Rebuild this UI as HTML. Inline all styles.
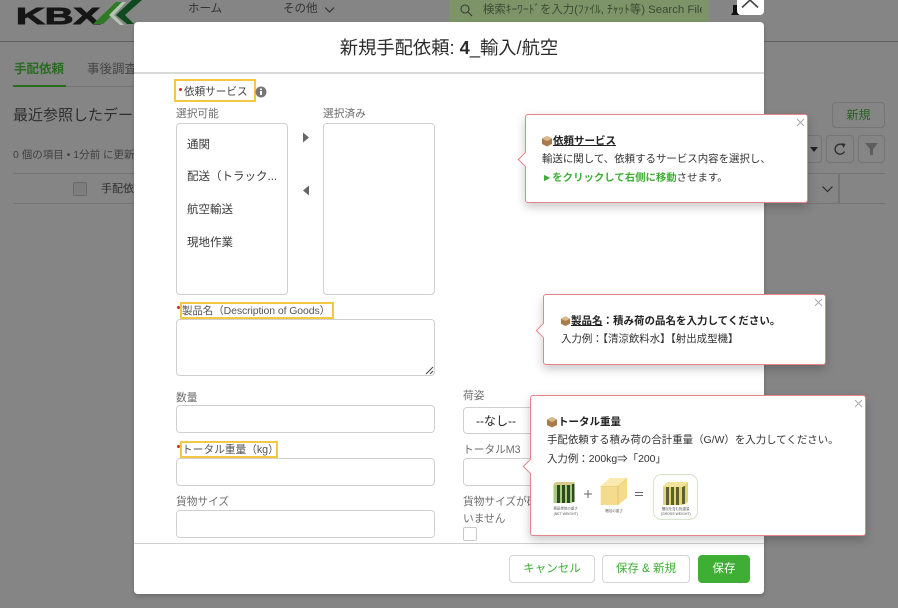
<!DOCTYPE html>
<html lang="ja">
<head>
<meta charset="utf-8">
<style>
html{margin:0;padding:0;width:898px;height:608px;overflow:hidden;background:#858585}
body{margin:0;padding:0;width:898px;height:608px;overflow:hidden;background:#858585;font-family:"Liberation Sans","Noto Sans CJK JP",sans-serif;color:#3a3a3a;position:relative;filter:blur(.35px)}
.t{position:absolute;white-space:nowrap;line-height:16px;font-size:11px}
.b{position:absolute;box-sizing:border-box}
.lb{color:#6d6d6d;font-size:10.7px}
.inp{position:absolute;box-sizing:border-box;background:#fff;border:1px solid #d0d0d0;border-radius:4px}
.hl{position:absolute;box-sizing:border-box;border:2px solid #f5c844}
.dot{position:absolute;width:3px;height:3px;border-radius:50%;background:#d8232a}
.pop{position:absolute;box-sizing:border-box;background:#fff;border:1.5px solid #e5848b;border-radius:3px;box-shadow:0 4px 10px rgba(0,0,0,.22)}
.pop .ar{position:absolute;left:-6px;width:10px;height:10px;background:#fff;border-left:1.5px solid #e5848b;border-bottom:1.5px solid #e5848b;transform:rotate(45deg)}
.x{position:absolute;width:9px;height:9px}
.btn{position:absolute;box-sizing:border-box;border:1px solid #d4d4d4;border-radius:4px;background:#fff;color:#3fae35;font-size:11.5px;text-align:center;line-height:27px;height:28px;white-space:nowrap}
</style>
</head>
<body>
<!-- background page -->
<svg class="b" style="left:0;top:0" width="150" height="30" viewBox="0 0 150 30">
<text x="16" y="24" font-family="Liberation Sans" font-weight="700" font-size="23" fill="#161616" stroke="#161616" stroke-width=".9" textLength="84" lengthAdjust="spacingAndGlyphs">KBX</text>
<path d="M93 24 L116 2 L126 2 L103 24Z" fill="#2f7a25"/>
<path d="M109 15 L122 2 L126 2 L114 15 L124 25 L120 25Z" fill="#b5c6b0"/>
<path d="M116 15 L132 0 L142 0 L125 15 L134 24 L127 24Z" fill="#0f4a1f"/>
</svg>
<div class="t" style="left:188px;top:1px;color:#333;font-size:11.5px">ホーム</div>
<div class="t" style="left:283px;top:1px;color:#333;font-size:11.5px">その他</div>
<svg class="b" style="left:324px;top:6px" width="11" height="8"><path d="M1 1.500 L5.500 6 L10 1.500" fill="none" stroke="#333" stroke-width="1.2"/></svg>
<div class="b" style="left:449px;top:0;width:260px;height:22px;background:#7c9467"></div>
<svg class="b" style="left:459px;top:3px" width="14" height="14"><circle cx="6" cy="6" r="4" fill="none" stroke="#3a3a3a" stroke-width="1.1"/><path d="M9 9 L13 13" stroke="#3a3a3a" stroke-width="1.1"/></svg>
<div class="t" style="left:483px;top:2px;width:219px;overflow:hidden;color:#3c4a34;font-size:11.4px">検索ｷｰﾜｰﾄﾞを入力(ﾌｧｲﾙ, ﾁｬｯﾄ等) Search Files</div>
<svg class="b" style="left:729px;top:2px" width="14" height="16"><path d="M2 13 H12 L10 10 V3 H4 V10Z" fill="#111"/></svg>
<div class="b" style="left:0;top:41px;width:898px;height:1px;background:#5f5f5f"></div>
<div class="t" style="left:14px;top:61px;color:#2a6b22;font-weight:700;font-size:12.5px">手配依頼</div>
<div class="b" style="left:13px;top:85px;width:53px;height:2px;background:#2a6b22"></div>
<div class="b" style="left:66px;top:86px;width:68px;height:1px;background:#747474"></div>
<div class="t" style="left:87px;top:61px;color:#444;font-size:12.5px;width:47px;overflow:hidden">事後調査</div>
<div class="t" style="left:13px;top:105px;font-size:15px;line-height:22px;color:#2e2e2e;width:121px;overflow:hidden">最近参照したデータ</div>
<div class="t" style="left:13px;top:147px;font-size:10.5px;color:#404040;width:121px;overflow:hidden">0 個の項目 • 1分前 に更新</div>
<div class="b" style="left:13px;top:173px;width:121px;height:1px;background:#747474"></div>
<div class="b" style="left:13px;top:203px;width:121px;height:1px;background:#747474"></div>
<div class="b" style="left:73px;top:182px;width:14px;height:14px;border:1px solid #6a6a6a;border-radius:2px;background:#7d7d7d"></div>
<div class="t" style="left:101px;top:181px;width:33px;overflow:hidden;color:#2e2e2e">手配依頼</div>
<div class="b" style="left:832px;top:102px;width:53px;height:26px;border:1px solid #747474;border-radius:4px;text-align:center;color:#2a5f24;font-size:12px;line-height:24px">新規</div>
<div class="b" style="left:790px;top:135px;width:32px;height:28px;border:1px solid #747474;border-radius:4px"></div>
<div class="b" style="left:826px;top:135px;width:28px;height:28px;border:1px solid #747474;border-radius:4px"></div>
<div class="b" style="left:858px;top:135px;width:27px;height:28px;border:1px solid #747474;border-radius:4px"></div>
<svg class="b" style="left:810px;top:147px" width="8" height="6"><path d="M0 0H8L4 5Z" fill="#222"/></svg>
<svg class="b" style="left:833px;top:142px" width="15" height="15"><path d="M11.500 9.500 A5 5 0 1 1 10.500 3.500" fill="none" stroke="#2d2d2d" stroke-width="1.3"/><path d="M8.500 1 L12.500 2 L10.500 6Z" fill="#2d2d2d"/></svg>
<svg class="b" style="left:864px;top:142px" width="15" height="14"><path d="M1 1H14L9 7V13H6V7Z" fill="#5d5d5d"/></svg>
<div class="b" style="left:807px;top:173px;width:78px;height:1px;background:#747474"></div>
<div class="b" style="left:807px;top:203px;width:78px;height:1px;background:#747474"></div>
<div class="b" style="left:838px;top:174px;width:2px;height:29px;background:#747474"></div>
<svg class="b" style="left:821px;top:185px" width="13" height="9"><path d="M1.500 1.500 L6.500 6.500 L11.500 1.500" fill="none" stroke="#2d2d2d" stroke-width="1.2"/></svg>

<!-- close button -->
<div class="b" style="left:737px;top:-8px;width:27px;height:23px;background:#fff;border-radius:4px"></div>
<svg class="b" style="left:737px;top:0" width="27" height="12"><path d="M5 7.500 L13 0 L21 7.500" fill="none" stroke="#444" stroke-width="1.6"/></svg>

<!-- modal -->
<div class="b" style="left:134px;top:22px;width:630px;height:572px;background:#fff;border-radius:4px;box-shadow:0 2px 4px rgba(0,0,0,.2)"></div>
<div class="t" style="left:134px;top:36px;width:630px;text-align:center;font-size:18.3px;line-height:24px;color:#2b2b2b">新規手配依頼: <span style="font-weight:700">4</span>_輸入/航空</div>
<div class="b" style="left:134px;top:72px;width:630px;height:2px;background:#d9d9d9"></div>

<div class="hl" style="left:174px;top:79px;width:82px;height:23px"></div>
<div class="dot" style="left:178.500px;top:88px"></div>
<div class="t" style="left:184px;top:84px;color:#444;font-size:10.6px">依頼サービス</div>
<svg class="b" style="left:255px;top:86px" width="12" height="12"><circle cx="6" cy="6" r="5.500" fill="#777"/><rect x="5" y="5" width="2" height="4" fill="#fff"/><rect x="5" y="2.500" width="2" height="1.500" fill="#fff"/></svg>
<div class="t lb" style="left:176px;top:106px">選択可能</div>
<div class="t lb" style="left:323px;top:106px">選択済み</div>
<div class="inp" style="left:176px;top:123px;width:112px;height:172px"></div>
<div class="inp" style="left:323px;top:123px;width:112px;height:172px"></div>
<div class="t" style="left:187px;top:137px;font-size:11.500px">通関</div>
<div class="t" style="left:187px;top:169px;font-size:11.500px">配送（トラック...</div>
<div class="t" style="left:187px;top:202px;font-size:11.500px">航空輸送</div>
<div class="t" style="left:187px;top:235px;font-size:11.500px">現地作業</div>
<svg class="b" style="left:302px;top:132px" width="8" height="11"><path d="M1 0.500 L7 5.500 L1 10.500Z" fill="#666"/></svg>
<svg class="b" style="left:302px;top:185px" width="8" height="11"><path d="M7 0.500 L1 5.500 L7 10.500Z" fill="#666"/></svg>

<div class="dot" style="left:177px;top:305.500px"></div>
<div class="hl" style="left:180px;top:302px;width:154px;height:17px"></div>
<div class="t" style="left:182px;top:303px;color:#555;font-size:10.5px;letter-spacing:-.1px">製品名（Description of Goods）</div>
<div class="inp" style="left:176px;top:319px;width:259px;height:57px"></div>
<svg class="b" style="left:425px;top:366px" width="9" height="9"><path d="M1 8 L8 1 M5 8 L8 5" stroke="#444" stroke-width="1"/></svg>

<div class="t lb" style="left:176px;top:390px">数量</div>
<div class="inp" style="left:176px;top:405px;width:259px;height:28px"></div>
<div class="t lb" style="left:463px;top:388px">荷姿</div>
<div class="inp" style="left:463px;top:407px;width:80px;height:27px"></div>
<div class="t" style="left:476px;top:413px;font-size:12px;color:#222">--なし--</div>

<div class="dot" style="left:177px;top:444.500px"></div>
<div class="hl" style="left:180px;top:441px;width:98px;height:17px"></div>
<div class="t" style="left:182px;top:442px;color:#555;font-size:10.7px">トータル重量（kg）</div>
<div class="inp" style="left:176px;top:458px;width:259px;height:28px"></div>
<div class="t lb" style="left:463px;top:442px">トータルM3</div>
<div class="inp" style="left:463px;top:458px;width:80px;height:28px"></div>

<div class="t lb" style="left:176px;top:494px">貨物サイズ</div>
<div class="inp" style="left:176px;top:510px;width:259px;height:28px"></div>
<div class="t lb" style="left:463px;top:494px;width:70px;overflow:hidden">貨物サイズが確定して</div>
<div class="t lb" style="left:463px;top:511px">いません</div>
<div class="b" style="left:463px;top:527px;width:14px;height:14px;border:1px solid #c8c8c8;border-radius:2px;background:#fff"></div>

<!-- footer -->
<div class="b" style="left:134px;top:543px;width:630px;height:51px;background:#fff;border-top:1px solid #cfcfcf;border-radius:0 0 4px 4px"></div>
<div class="btn" style="left:509px;top:555px;width:86px">キャンセル</div>
<div class="btn" style="left:602px;top:555px;width:88px">保存 &amp; 新規</div>
<div class="btn" style="left:698px;top:555px;width:52px;background:#3fae35;border-color:#3fae35;color:#fff">保存</div>

<!-- popover 1 -->
<div class="pop" style="left:525px;top:114px;width:283px;height:89px">
<div class="ar" style="top:39px"></div>
<svg class="x" style="left:270px;top:3px" viewBox="0 0 9 9"><path d="M1 1L8 8M8 1L1 8" stroke="#aaa" stroke-width="1"/></svg>
</div>
<svg class="b" style="left:541px;top:135px" width="12" height="12" viewBox="0 0 12 12"><path d="M6 1L11 3.500V9L6 11.500L1 9V3.500Z" fill="#a87b4b"/><path d="M1 3.500L6 1L11 3.500L6 6Z" fill="#d9b98d"/></svg>
<div class="t" style="left:553px;top:133px;font-weight:700;font-size:10.500px;text-decoration:underline;color:#222">依頼サービス</div>
<div class="t" style="left:542px;top:152px;font-size:10.450px;color:#333">輸送に関して、依頼するサービス内容を選択し、</div>
<div class="t" style="left:542px;top:171px;font-size:10.400px;color:#333"><span style="color:#3fae35;font-weight:700">►をクリックして右側に移動</span>させます。</div>

<!-- popover 2 -->
<div class="pop" style="left:543px;top:294px;width:283px;height:71px">
<div class="ar" style="top:30px"></div>
<svg class="x" style="left:270px;top:3px" viewBox="0 0 9 9"><path d="M1 1L8 8M8 1L1 8" stroke="#aaa" stroke-width="1"/></svg>
</div>
<svg class="b" style="left:560px;top:315px" width="11" height="12" viewBox="0 0 12 12"><path d="M6 1L11 3.500V9L6 11.500L1 9V3.500Z" fill="#a87b4b"/><path d="M1 3.500L6 1L11 3.500L6 6Z" fill="#d9b98d"/></svg>
<div class="t" style="left:571px;top:313px;font-weight:700;font-size:10.500px;color:#222"><u>製品名</u>：積み荷の品名を入力してください。</div>
<div class="t" style="left:561px;top:332px;font-size:10.450px;color:#333">入力例：【清涼飲料水】【射出成型機】</div>

<!-- popover 3 -->
<div class="pop" style="left:530px;top:395px;width:336px;height:141px">
<div class="ar" style="top:65px"></div>
<svg class="x" style="left:323px;top:3px" viewBox="0 0 9 9"><path d="M1 1L8 8M8 1L1 8" stroke="#aaa" stroke-width="1"/></svg>
</div>
<svg class="b" style="left:546px;top:416px" width="12" height="12" viewBox="0 0 12 12"><path d="M6 1L11 3.500V9L6 11.500L1 9V3.500Z" fill="#a87b4b"/><path d="M1 3.500L6 1L11 3.500L6 6Z" fill="#d9b98d"/></svg>
<div class="t" style="left:558px;top:414px;font-weight:700;font-size:10.500px;color:#222">トータル重量</div>
<div class="t" style="left:547px;top:433px;font-size:10.450px;color:#333">手配依頼する積み荷の合計重量（G/W）を入力してください。</div>
<div class="t" style="left:547px;top:452px;font-size:10.450px;color:#333">入力例：200kg⇒「200」</div>

<!-- weight illustration -->
<svg class="b" style="left:550px;top:472px" width="152" height="50" viewBox="0 0 152 50">
<rect x="103.500" y="2.500" width="44" height="45" rx="8" fill="#fff" stroke="#d8e3c8"/>
<path d="M3.500 12 L6 10 H24.500 V30 L21 31 H3.500Z" fill="#a6cc7e"/>
<path d="M7 13h3v18h-3zM12 13h3v18h-3zM17 13h3v18h-3zM22 12h2.500v18h-2.500z" fill="#2f4a22"/>
<path d="M3.500 12 L6 10 H24.500 L21 13 H3.500Z" fill="#d8c98c"/>
<text x="15.700" y="37.500" font-size="3.500" text-anchor="middle" fill="#555">商品単体の重さ</text>
<text x="15.700" y="43" font-size="3.500" text-anchor="middle" fill="#555">(NET WEIGHT)</text>
<path d="M34 22H42M38 18V26" stroke="#666" stroke-width="1"/>
<path d="M50.700 14 L60 6 H77 V26 L68 33 H50.700Z" fill="#f4dc8c"/>
<path d="M50.700 14 H68 V33 M68 14 L77 6" fill="none" stroke="#cfb45e" stroke-width=".6"/>
<path d="M50.700 14 L60 6 H77 L68 14Z" fill="#fbeab0"/>
<text x="64" y="40" font-size="3.500" text-anchor="middle" fill="#555">梱包の重さ</text>
<path d="M85 20.500H93M85 23.500H93" stroke="#666" stroke-width="1"/>
<path d="M113 14 L118 10 H138 V30 L133 33 H113Z" fill="#dfd678"/>
<path d="M116 15h3v18h-3zM121 15h3v18h-3zM126 15h3v18h-3zM132 14h3v18h-3z" fill="#5d6030"/>
<path d="M113 14 L118 10 H138 L133 15 H113Z" fill="#f2e39a"/>
<text x="125.700" y="38" font-size="3.500" text-anchor="middle" fill="#555">梱包を含む総重量</text>
<text x="125.700" y="43" font-size="3.500" text-anchor="middle" fill="#555">(GROSS WEIGHT)</text>
</svg>
</body>
</html>
